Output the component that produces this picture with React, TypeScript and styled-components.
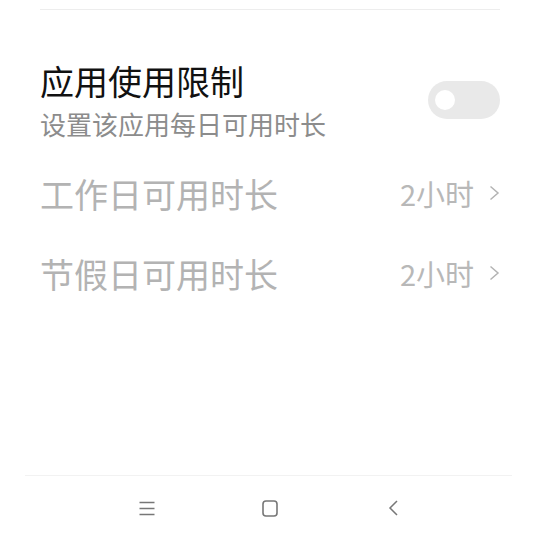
import React from "react";
import styled, { createGlobalStyle } from "styled-components";

const Global = createGlobalStyle`
  html, body { margin: 0; padding: 0; background: #ffffff; }
  body { font-family: "Noto Sans CJK SC", "Noto Sans", sans-serif; }
`;

const Page = styled.div`
  width: 540px;
  height: 540px;
  display: flex;
  flex-direction: column;
  background: #fff;
  overflow: hidden;
`;

const Content = styled.div`
  padding: 0 40px;
  display: flex;
  flex-direction: column;
`;

const Divider = styled.div`
  margin-top: 9px;
  height: 1px;
  background: #ededed;
`;

const Header = styled.div`
  margin-top: 38px;
  height: 104px;
  display: flex;
  align-items: center;
  justify-content: space-between;
`;

const TitleBlock = styled.div`
  display: flex;
  flex-direction: column;
  gap: 6px;
`;

const Title = styled.div`
  font-size: 34px;
  line-height: 42px;
  color: #111;
  font-weight: 400;
`;

const Subtitle = styled.div`
  font-size: 26px;
  line-height: 32px;
  color: #8c8c8c;
`;

const Toggle = styled.div`
  width: 72px;
  height: 38px;
  border-radius: 19px;
  background: #e9e9e9;
  display: flex;
  align-items: center;
  padding-left: 7px;
  box-sizing: border-box;
`;

const Knob = styled.div`
  width: 20px;
  height: 20px;
  border-radius: 50%;
  background: #fff;
`;

const Row = styled.div`
  height: 80px;
  display: flex;
  align-items: center;
  justify-content: space-between;
`;

const Rows = styled.div`
  margin-top: 1px;
  display: flex;
  flex-direction: column;
`;

const Label = styled.div`
  font-size: 34px;
  color: #b3b3b3;
`;

const Value = styled.div`
  display: flex;
  align-items: center;
  gap: 15px;
  font-size: 29px;
  color: #b8b8b8;
`;

const NavBar = styled.div`
  margin-top: auto;
  height: 65px;
  display: flex;
  flex-direction: column;
`;

const NavLine = styled.div`
  height: 1px;
  margin: 0 28px 0 25px;
  background: #f2f2f2;
`;

const NavIcons = styled.div`
  flex: 1;
  display: grid;
  grid-template-columns: repeat(3, 123px);
  justify-content: center;
  align-items: center;
  justify-items: center;
`;

const Chevron = () => (
  <svg width="11" height="16" viewBox="0 0 11 16">
    <path d="M1.5 1.5 L9 8 L1.5 14.5" fill="none" stroke="#b3b3b3" strokeWidth="1.5" />
  </svg>
);

const SettingRow = ({ label, value }: { label: string; value: string }) => (
  <Row>
    <Label>{label}</Label>
    <Value>
      <span>{value}</span>
      <Chevron />
    </Value>
  </Row>
);

export default function App() {
  return (
    <Page>
      <Global />
      <Content>
        <Divider />
        <Header>
          <TitleBlock>
            <Title>应用使用限制</Title>
            <Subtitle>设置该应用每日可用时长</Subtitle>
          </TitleBlock>
          <Toggle>
            <Knob />
          </Toggle>
        </Header>
        <Rows>
          <SettingRow label="工作日可用时长" value="2小时" />
          <SettingRow label="节假日可用时长" value="2小时" />
        </Rows>
      </Content>
      <NavBar>
        <NavLine />
        <NavIcons>
          <svg width="16" height="15" viewBox="0 0 16 15">
            <g stroke="#777" strokeWidth="1.5">
              <line x1="0.5" y1="1.5" x2="15.5" y2="1.5" />
              <line x1="0.5" y1="7.5" x2="15.5" y2="7.5" />
              <line x1="0.5" y1="13.5" x2="15.5" y2="13.5" />
            </g>
          </svg>
          <svg width="16" height="17" viewBox="0 0 16 17">
            <rect x="1" y="1" width="14" height="15" rx="3" fill="none" stroke="#777" strokeWidth="1.6" />
          </svg>
          <svg width="11" height="16" viewBox="0 0 11 16">
            <path d="M9 1 L2 8 L9 15" fill="none" stroke="#777" strokeWidth="1.5" />
          </svg>
        </NavIcons>
      </NavBar>
    </Page>
  );
}
